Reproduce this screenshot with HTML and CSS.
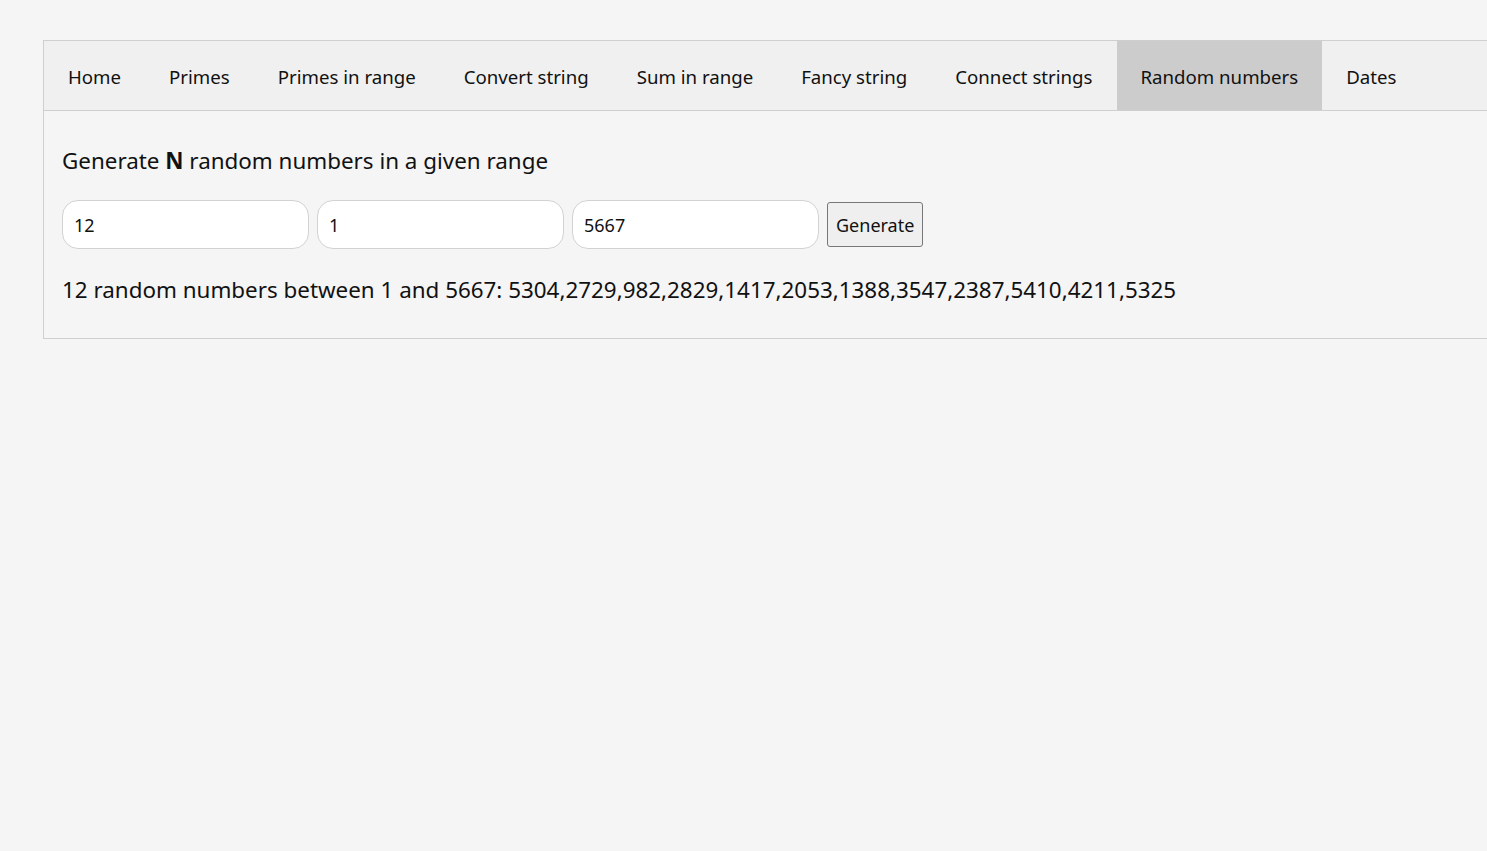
FILE: index.html
```html
<!DOCTYPE html>
<html>
<head>
<meta charset="utf-8">
<link rel="stylesheet" href="styles.css">
</head>
<body>
<div class="app">
  <nav class="tabs">
    <a class="tab">Home</a>
    <a class="tab">Primes</a>
    <a class="tab">Primes in range</a>
    <a class="tab">Convert string</a>
    <a class="tab">Sum in range</a>
    <a class="tab">Fancy string</a>
    <a class="tab">Connect strings</a>
    <a class="tab active">Random numbers</a>
    <a class="tab">Dates</a>
  </nav>
  <section class="panel">
    <h2 class="title">Generate <b>N</b> random numbers in a given range</h2>
    <div class="form">
      <input class="field" type="text" value="12">
      <input class="field" type="text" value="1">
      <input class="field" type="text" value="5667">
      <button class="btn">Generate</button>
    </div>
    <p class="result">12 random numbers between 1 and 5667: 5304,2729,982,2829,1417,2053,1388,3547,2387,5410,4211,5325</p>
  </section>
</div>
</body>
</html>
```
FILE: styles.css
```css
html, body {
  margin: 0;
  padding: 0;
  background: #f5f5f5;
  font-family: "Noto Sans", "Open Sans", sans-serif;
  color: #111;
}
.app {
  margin: 40px 0 0 43px;
  border: 1px solid #cfcfcf;
  border-right: none;
}
.tabs {
  display: flex;
  height: 69px;
  background: #f0f0f0;
  border-bottom: 1px solid #cfcfcf;
}
.tab {
  display: flex;
  align-items: center;
  padding: 1px 24px 0;
  font-size: 18.65px;
  color: #111;
  cursor: pointer;
}
.tab.active {
  background: #cccccc;
}
.panel {
  padding: 35px 18px 33px;
  background: #f5f5f5;
}
.title {
  margin: 0;
  font-size: 22.4px;
  font-weight: 400;
  line-height: 30px;
}
.title b {
  font-weight: 700;
}
.form {
  display: flex;
  align-items: center;
  gap: 8px;
  margin-top: 24px;
}
.field {
  box-sizing: border-box;
  width: 247px;
  height: 49px;
  border: 1px solid #d2d2d2;
  border-radius: 16px;
  background: #fff;
  padding: 0 11px;
  font-family: inherit;
  font-size: 18px;
  color: #111;
  outline: none;
}
.btn {
  box-sizing: border-box;
  height: 45px;
  padding: 0 8px;
  border: 1px solid #777;
  border-radius: 3px;
  background: #efefef;
  font-family: inherit;
  font-size: 18px;
  color: #111;
}
.result {
  margin: 26px 0 0;
  font-size: 22.4px;
  line-height: 30px;
}
```
